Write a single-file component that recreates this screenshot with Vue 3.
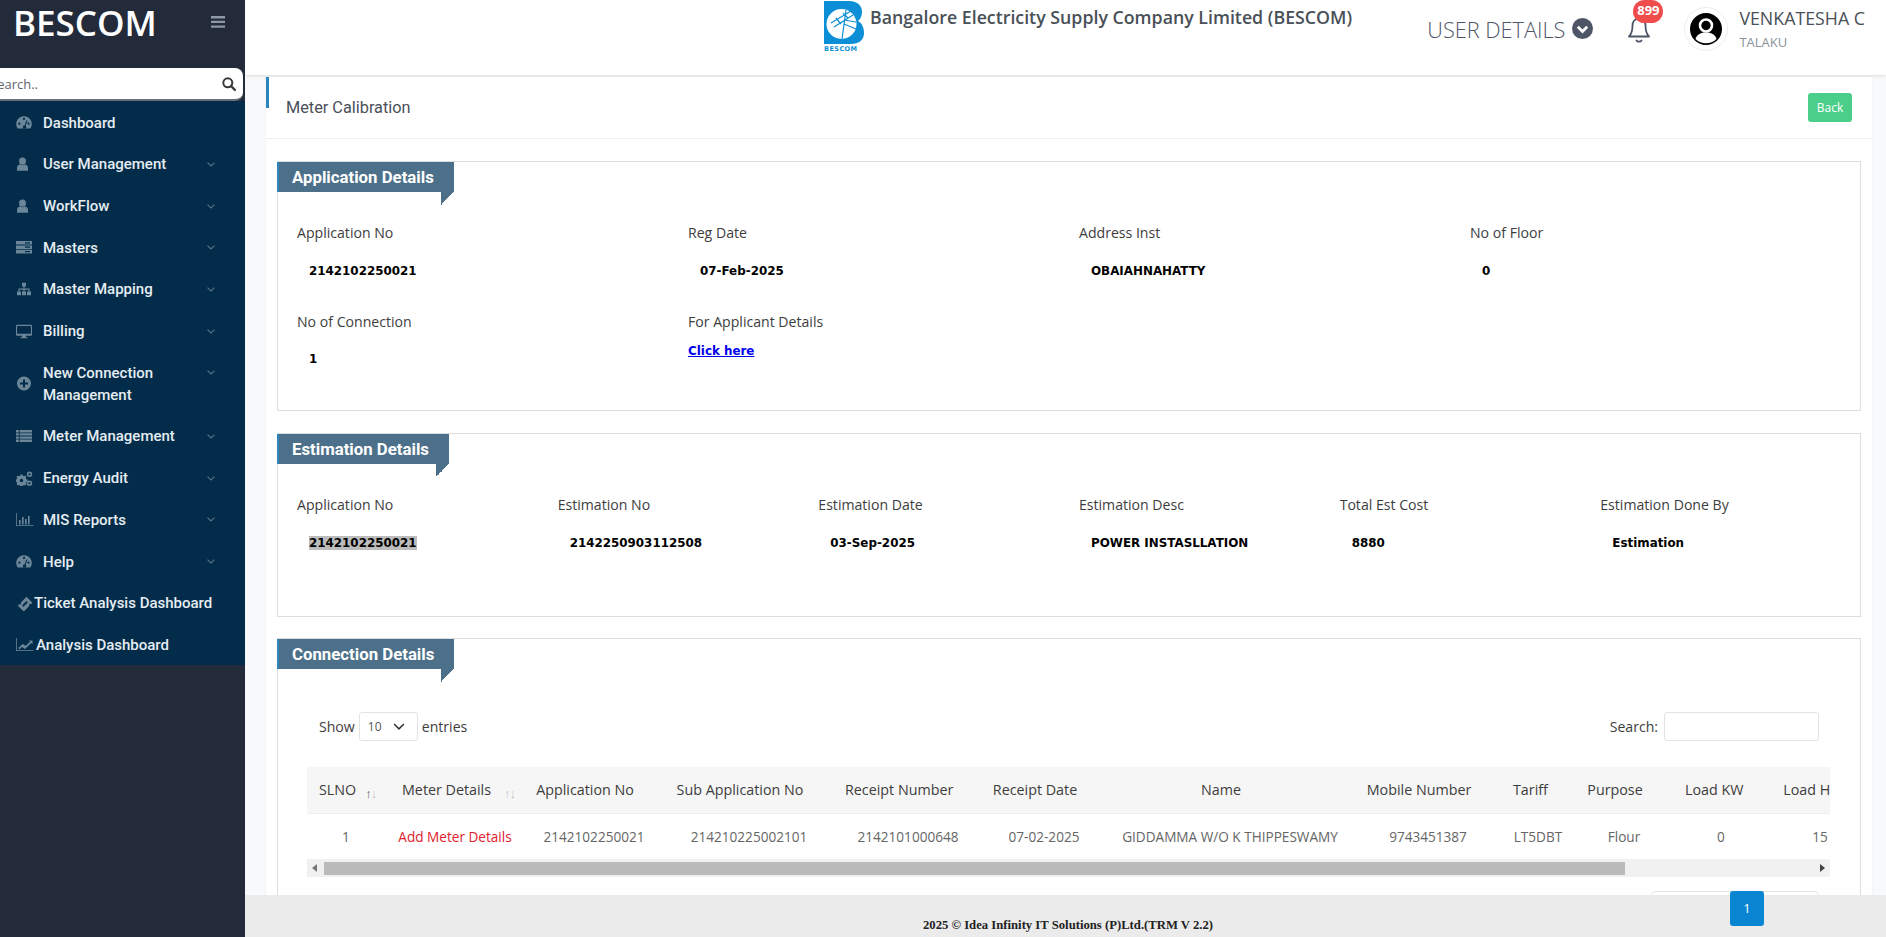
<script setup>
const nav = [
  { t: 'Dashboard', i: 'gauge' },
  { t: 'User Management', i: 'user', c: 1 },
  { t: 'WorkFlow', i: 'user', c: 1 },
  { t: 'Masters', i: 'server', c: 1 },
  { t: 'Master Mapping', i: 'sitemap', c: 1 },
  { t: 'Billing', i: 'desktop', c: 1 },
  { t: 'New Connection Management', i: 'plus', c: 1, wrap: 1 },
  { t: 'Meter Management', i: 'list', c: 1 },
  { t: 'Energy Audit', i: 'cogs', c: 1 },
  { t: 'MIS Reports', i: 'bars', c: 1 },
  { t: 'Help', i: 'gauge', c: 1 },
  { t: 'Ticket Analysis Dashboard', i: 'ticket', tight: 18 },
  { t: 'Analysis Dashboard', i: 'line', tight: 20 }
]
const icons = {
  gauge: 'M8 1.2a7.8 7.8 0 0 0-6.8 11.6l.4.7h12.8l.4-.7A7.8 7.8 0 0 0 8 1.2zM8 2.8a1.1 1.1 0 1 1 0 2.2 1.1 1.1 0 0 1 0-2.2zM3.4 7.6a1.1 1.1 0 1 1 0 2.2 1.1 1.1 0 0 1 0-2.2zM12.6 7.6a1.1 1.1 0 1 1 0 2.2 1.1 1.1 0 0 1 0-2.2zM10.6 5.2l.9.5-2 5a1.6 1.6 0 1 1-1-.3z',
  user: 'M6.500.6a3.400 3.400 0 0 1 3.400 3.600 3.400 3.400 0 0 1-3.400 3.600 3.400 3.400 0 0 1-3.400-3.600A3.400 3.400 0 0 1 6.500.6zM1 13.800v-3C1 8.800 2.500 7.800 3.900 7.600c1.500 1 3.700 1 5.200 0 1.400.2 2.900 1.200 2.900 3.200v3z',
  server: 'M0 1h16v3.600H0zM9 2.200v1.200h5V2.200zM0 5.400h16V9H0zM9 6.600v1.200h5V6.600zM0 9.800h16v3.600H0zM9 11v1.200h5V11z',
  sitemap: 'M6 .8h4v3.600H8.600v2.200h5v3H15v3.600h-4V9.600h1.500V7.700H8.600v1.900H10v3.600H6V9.600h1.400V7.700H3.500v1.900H5v3.600H1V9.600h1.400v-3h5V4.400H6z',
  desktop: 'M1 .8h14a1 1 0 0 1 1 1v9a1 1 0 0 1-1 1H9.800l.4 1.400h1.400v1H4.400v-1h1.400l.4-1.400H1a1 1 0 0 1-1-1v-9a1 1 0 0 1 1-1zM1.100 1.900v7.800h13.800V1.900z',
  plus: 'M8 .5a7 7 0 1 1 0 14 7 7 0 0 1 0-14zM7 3.500v3H4v2h3v3h2v-3h3v-2H9v-3z',
  list: 'M0 1h2.800v2.400H0zM3.600 1H16v2.400H3.600zM0 4.200h2.800v2.400H0zM3.600 4.200H16v2.400H3.600zM0 7.400h2.800v2.400H0zM3.600 7.400H16v2.400H3.600zM0 10.600h2.800V13H0zM3.600 10.600H16V13H3.600z',
  cogs: 'M4.500 3.500h2l.3 1.300 1.200.5 1.100-.7 1.400 1.400-.7 1.100.5 1.200 1.300.3v2l-1.300.3-.5 1.200.7 1.100-1.400 1.400-1.100-.7-1.200.5-.3 1.300h-2l-.3-1.300-1.200-.5-1.100.7-1.400-1.400.7-1.100-.5-1.200-1.300-.3v-2l1.300-.3.5-1.200-.7-1.100 1.400-1.400 1.100.7 1.200-.5zM5.500 7.800a1.700 1.700 0 1 0 0 3.400 1.700 1.700 0 0 0 0-3.400zM13.500.6a2.700 2.700 0 1 1 0 5.400 2.700 2.700 0 0 1 0-5.400zM13.500 2.200a1.100 1.100 0 1 0 0 2.200 1.100 1.100 0 0 0 0-2.200zM13.500 9.600a2.700 2.700 0 1 1 0 5.400 2.700 2.700 0 0 1 0-5.400zM13.500 11.200a1.100 1.100 0 1 0 0 2.200 1.100 1.100 0 0 0 0-2.200z',
  bars: 'M0 1h.8v12.200H17.500v.8H0zM3 8h1.600v4.400H3zM6 5h1.600v7.400H6zM9 7h1.600v5.400H9zM12 4h1.600v8.400H12z',
  ticket: 'M10.500.8l6 6-1.400 1.400a1.300 1.300 0 0 0-1.800 1.800l-5.600 5.600-6-6 1.400-1.400a1.300 1.300 0 0 0 1.800-1.800zM10.400 5L6 9.400l1.400 1.400 4.400-4.400z',
  line: 'M0 1h.8v12.200H17.500v.8H0zM2.500 10.800l4.200-3.800 3 1.800 4.300-4-1.200-1.200h3.700v3.700l-1.200-1.200-6.300 5.800-3-1.800-3 2.600z'
}
const app = [
  { l: 'Application No', v: '2142102250021' },
  { l: 'Reg Date', v: '07-Feb-2025' },
  { l: 'Address Inst', v: 'OBAIAHNAHATTY' },
  { l: 'No of Floor', v: '0' },
  { l: 'No of Connection', v: '1' },
  { l: 'For Applicant Details', link: 'Click here' }
]
const est = [
  { l: 'Application No', v: '2142102250021', sel: 1 },
  { l: 'Estimation No', v: '2142250903112508' },
  { l: 'Estimation Date', v: '03-Sep-2025' },
  { l: 'Estimation Desc', v: 'POWER INSTASLLATION' },
  { l: 'Total Est Cost', v: '8880' },
  { l: 'Estimation Done By', v: 'Estimation' }
]
const cols = [78, 140, 138, 172, 146, 126, 246, 150, 70, 102, 92, 106]
const heads = ['Application No', 'Sub Application No', 'Receipt Number', 'Receipt Date', 'Name', 'Mobile Number', 'Tariff', 'Purpose', 'Load KW', 'Load HP']
const cells = ['2142102250021', '214210225002101', '2142101000648', '07-02-2025', 'GIDDAMMA W/O K THIPPESWAMY', '9743451387', 'LT5DBT', 'Flour', '0', '15']
</script>

<template>
  <div class="page">
    <aside class="side">
      <div class="brand">
        <span class="brand-name">BESCOM</span>
        <svg class="burger" viewBox="0 0 14 12" width="14" height="12"><path d="M0 0h14v2.400H0zM0 4.700h14v2.400H0zM0 9.400h14v2.400H0z" /></svg>
      </div>
      <div class="side-search">
        <span class="side-search-text">Search..</span>
        <svg viewBox="0 0 14 14" width="14" height="14"><circle cx="5.800" cy="5.800" r="4.500" fill="none" stroke="#3a3a3a" stroke-width="2" /><path d="M9 9l4 4" stroke="#3a3a3a" stroke-width="2.400" stroke-linecap="round" /></svg>
      </div>
      <nav class="nav">
        <div v-for="n in nav" :key="n.t" class="nav-item">
          <span class="nav-icon" :class="{ tight: n.tight }" :style="n.tight ? { width: n.tight + 'px' } : null">
            <svg viewBox="0 0 18 15" width="18" height="15"><path :d="icons[n.i]" fill-rule="evenodd" /></svg>
          </span>
          <span class="nav-text" :class="{ wrap: n.wrap }">{{ n.t }}</span>
          <span v-if="n.c" class="nav-chev">
            <svg viewBox="0 0 8 5" width="8" height="5"><path d="M.5.7L4 4l3.500-3.300" fill="none" stroke="#58758b" stroke-width="1.100" /></svg>
          </span>
        </div>
      </nav>
    </aside>

    <div class="main">
      <header class="top">
        <svg class="logo" viewBox="0 0 40 52" width="40" height="52">
          <path d="M0 1H25C34 1 38 6 38 12C38 16 36.500 19 34 21C38 23 40 28 40 33C40 40 35 44 27 44H0Z" fill="#0c8fd6" />
          <circle cx="17.500" cy="24" r="15" fill="#fff" />
          <path d="M22 10L18 39M7 23L27 11M10 27L29 15M12 18l5 6M19 13l5 5M20 24L32 29M20 20L32 22" stroke="#0c8fd6" stroke-width="1.200" fill="none" />
          <text x="0" y="50.500" font-size="6.500" font-weight="700" font-family="DejaVu Sans" fill="#0c8fd6" textLength="33">BESCOM</text>
        </svg>
        <div class="company">Bangalore Electricity Supply Company Limited (BESCOM)</div>
        <div class="top-right">
          <span class="user-details">USER DETAILS</span>
          <svg class="chev-circle" viewBox="0 0 21 21" width="21" height="21">
            <circle cx="10.500" cy="10.500" r="10.500" fill="#4e5566" />
            <path d="M5.800 8.800l4.700 4.700 4.700-4.700" fill="none" stroke="#fff" stroke-width="2.800" />
          </svg>
          <div class="bell">
            <svg viewBox="0 0 24 26" width="24" height="26">
              <path d="M12 1.500c-4 0-6.500 3-6.500 7 0 6-1.500 9-3.500 11h20c-2-2-3.500-5-3.500-11 0-4-2.500-7-6.500-7z" fill="none" stroke="#4e5566" stroke-width="1.800" stroke-linejoin="round" />
              <path d="M9.500 23.500c1 1.600 4 1.600 5 0" fill="none" stroke="#4e5566" stroke-width="1.800" stroke-linecap="round" />
            </svg>
            <span class="badge">899</span>
          </div>
          <div class="avatar">
            <svg viewBox="0 0 32 32" width="32" height="32">
              <circle cx="16" cy="16" r="16" fill="#000" />
              <circle cx="16" cy="12.500" r="6" fill="none" stroke="#fff" stroke-width="2.600" />
              <path d="M5.500 26c1.500-5 5.500-6.500 10.500-6.500S25 21 26.500 26c-3 3-6.500 4.300-10.500 4.300S8.500 29 5.500 26z" fill="#fff" />
            </svg>
          </div>
          <div class="who">
            <div class="who-name">VENKATESHA C</div>
            <div class="who-place">TALAKU</div>
          </div>
        </div>
      </header>

      <div class="content">
        <div class="card">
          <div class="card-head">
            <span class="card-title">Meter Calibration</span>
            <button class="back">Back</button>
          </div>

          <section class="box box-app">
            <div class="ribbon">Application Details</div>
            <div class="fields four">
              <div v-for="f in app" :key="f.l" class="field">
                <div class="label">{{ f.l }}</div>
                <a v-if="f.link" class="link" href="#">{{ f.link }}</a>
                <div v-else class="value">{{ f.v }}</div>
              </div>
            </div>
          </section>

          <section class="box box-est">
            <div class="ribbon">Estimation Details</div>
            <div class="fields six">
              <div v-for="f in est" :key="f.l" class="field">
                <div class="label">{{ f.l }}</div>
                <div class="value"><span :class="{ sel: f.sel }">{{ f.v }}</span></div>
              </div>
            </div>
          </section>

          <section class="box box-conn">
            <div class="ribbon">Connection Details</div>
            <div class="controls">
              <div class="ctl">
                <span>Show</span>
                <div class="select">
                  <span>10</span>
                  <svg viewBox="0 0 10 6" width="12" height="7"><path d="M.8.8L5 5 9.200.8" fill="none" stroke="#333" stroke-width="1.300" /></svg>
                </div>
                <span>entries</span>
              </div>
              <div class="ctl">
                <span>Search:</span>
                <div class="search-input"></div>
              </div>
            </div>
            <div class="table-wrap">
              <table class="grid">
                <colgroup><col v-for="(w, i) in cols" :key="i" :style="{ width: w + 'px' }" /></colgroup>
                <thead>
                  <tr>
                    <th class="th-sl">SLNO<span class="sort"><b>↑</b>↓</span></th>
                    <th class="th-md">Meter Details<span class="sort sort-far">↑↓</span></th>
                    <th v-for="h in heads" :key="h">{{ h }}</th>
                  </tr>
                </thead>
                <tbody>
                  <tr>
                    <td>1</td>
                    <td class="red">Add Meter Details</td>
                    <td v-for="c in cells" :key="c">{{ c }}</td>
                  </tr>
                </tbody>
              </table>
              <div class="hbar">
                <i class="arrow-l"></i>
                <div class="thumb"></div>
                <i class="arrow-r"></i>
              </div>
            </div>
            <div class="pager-row">
              <div class="pager"><span class="page-btn">1</span></div>
            </div>
          </section>
        </div>
      </div>

      <footer class="foot">2025 © Idea Infinity IT Solutions (P)Ltd.(TRM V 2.2)</footer>
    </div>
  </div>
</template>

<style>
html, body { margin: 0; overflow: hidden; }
</style>

<style scoped>
.page { display: flex; width: 1886px; height: 937px; overflow: hidden; background: #f8f9fb; font-family: "Open Sans", sans-serif; }

.side { width: 245px; flex: none; background: #232a3a; display: flex; flex-direction: column; }
.brand { height: 68px; display: flex; align-items: flex-start; justify-content: space-between; padding: 0 20px 0 13px; box-sizing: border-box; }
.brand-name { font-size: 35px; font-weight: 600; line-height: 45px; color: #fff; }
.burger { margin-top: 16px; fill: #8b98a6; }
.side-search { height: 33px; width: 253px; margin-left: -10px; box-sizing: border-box; background: #fff; border-radius: 0 8px 8px 0; border-bottom: 2px solid #6b6f7a; display: flex; align-items: center; justify-content: space-between; padding: 1px 7px 0 0; font-size: 13px; color: #5f6670; }
.nav { background: #022c4a; padding-top: .8px; height: 564px; box-sizing: border-box; }
.nav-item { display: flex; align-items: flex-start; padding: 9.850px 30px 9.850px 16px; }
.nav-icon { width: 27px; flex: none; height: 22px; display: flex; align-items: center; fill: #6b8599; align-self: center; }
.nav-icon.tight svg { flex: none; }
.nav-text { flex: 1; font: 500 15px/22px Roboto, sans-serif; color: #e6edf2; white-space: nowrap; }
.nav-text.wrap { white-space: normal; padding-right: 20px; }
.nav-chev { height: 22px; display: flex; align-items: center; }

.main { flex: 1; min-width: 0; display: flex; flex-direction: column; position: relative; overflow: hidden; }
.top { height: 75px; flex: none; background: #fff; box-shadow: 0 1px 3px rgba(0, 0, 0, .12); display: flex; align-items: flex-start; padding-left: 579px; padding-right: 21px; box-sizing: border-box; position: relative; }
.logo { flex: none; }
.company { margin-left: 6px; font-size: 17.780px; font-weight: 600; line-height: 34px; color: #495057; white-space: nowrap; }
.top-right { margin-left: auto; display: flex; align-items: flex-start; }
.user-details { font-size: 21.700px; line-height: 60px; color: #4e5566; white-space: nowrap; font-weight: 300; }
.chev-circle { margin: 18px 0 0 7px; }
.bell { position: relative; margin: 17px 0 0 34px; width: 24px; height: 26px; }
.badge { position: absolute; left: 6px; top: -17px; width: 30px; height: 23px; border-radius: 12px; background: #ef4c4c; color: #fff; font: 700 13px/21px "Open Sans", sans-serif; text-align: center; }
.avatar { margin: 7px 0 0 33px; width: 44px; height: 44px; border: 1px solid #eee; border-radius: 50%; box-sizing: border-box; display: flex; align-items: center; justify-content: center; }
.who { margin-left: 11px; padding-top: 6px; }
.who-name { font-size: 17.800px; line-height: 24px; color: #495057; white-space: nowrap; }
.who-place { font-size: 13px; line-height: 24px; color: #8b929a; }

.content { flex: 1; padding: 2px 14px 0 21px; min-height: 0; }
.card { background: #fff; box-shadow: 0 0 1px rgba(0, 0, 0, .1); position: relative; height: 900px; }
.card::before { content: ""; position: absolute; left: 0; top: 0; width: 3px; height: 31px; background: #2a86bd; }
.card-head { height: 61px; border-bottom: 1px solid #eee; display: flex; align-items: center; justify-content: space-between; padding: 0 20px; }
.card-title { font: 400 16.300px Roboto, sans-serif; color: #4a5058; }
.back { width: 44px; height: 29px; border: 0; border-radius: 3px; padding: 0; background: #4bce8a; color: #fff; font: 12px "Open Sans", sans-serif; margin-right: 0; }

.box { margin: 22px 11px 0; border: 1px solid #ddd; box-sizing: border-box; }
.box-app { height: 250px; }
.box-est { height: 184px; }
.box-conn { margin-top: 21px; height: 400px; }
.ribbon { position: relative; width: fit-content; height: 30px; padding: 0 20px 0 13px; background: #4d708a; border-left: 2px solid #2a86bd; margin-left: -1px; color: #fff; font: 700 16.800px/31px Roboto, sans-serif; }
.ribbon::after { content: ""; position: absolute; right: 0; top: 30px; width: 13px; height: 13px; background: linear-gradient(to bottom right, #4d708a 50%, transparent 50%); }

.fields { display: grid; padding: 31px 0 0 19px; row-gap: 30px; }
.four { grid-template-columns: repeat(4, 391px); }
.six { grid-template-columns: repeat(6, 260.670px); }
.label { font-size: 14.100px; line-height: 20px; color: #3d3d3d; white-space: nowrap; }
.value { margin-top: 17.500px; padding-left: 12px; font: 700 11.900px/21px "DejaVu Sans", sans-serif; color: #000; white-space: nowrap; }
.sel { background: #bcbcbc; }
.link { display: block; margin-top: 9px; font: 700 11.900px/20px "DejaVu Sans", sans-serif; color: #0000ee; }

.controls { display: flex; justify-content: space-between; margin: 43px 41px 0; height: 29px; font-size: 14.100px; color: #3d3d3d; }
.ctl { display: flex; align-items: center; gap: 4px; }
.select { width: 59px; height: 29px; box-sizing: border-box; border: 1px solid #e3e3e3; border-radius: 3px; display: flex; align-items: center; justify-content: space-between; padding: 0 12px 0 8px; font-size: 12px; color: #555; }
.search-input { width: 155px; height: 29px; margin-left: 2px; box-sizing: border-box; border: 1px solid #e3e3e3; border-radius: 3px; }

.table-wrap { margin: 26px 30px 0 29px; overflow: hidden; }
.grid { border-collapse: collapse; table-layout: fixed; width: 1566px; font-size: 13.600px; }
.grid th { height: 46px; padding: 0 28px 0 10px; background: #f6f6f6; border-bottom: 1px solid #eee; font-size: 14.300px; font-weight: 400; color: #3d3d3d; text-align: center; white-space: nowrap; box-sizing: border-box; }
.grid th.th-sl { padding: 0 0 0 12px; text-align: left; }
.grid th.th-md { padding: 0 0 0 17px; text-align: left; }
.sort { font-size: 13px; color: #c4c4c4; margin-left: 9px; position: relative; top: 3px; letter-spacing: -1px; }
.sort b { font-weight: 400; color: #666; }
.sort-far { margin-left: 13px; }
.grid td { height: 46px; padding: 0 10px; color: #666; text-align: center; white-space: nowrap; box-sizing: border-box; }
.grid td.red { color: #e0202c; }
.hbar { position: relative; height: 18px; background: #f1f1f1; display: flex; align-items: center; padding-left: 17px; }
.thumb { width: 1301px; height: 13px; background: #bababa; }
.arrow-l { position: absolute; left: 5px; top: 5px; border: 4px solid transparent; border-left: 0; border-right: 5px solid #777; }
.arrow-r { position: absolute; right: 5px; top: 5px; border: 4px solid transparent; border-right: 0; border-left: 5px solid #444; }

.pager-row { display: flex; justify-content: flex-end; margin: 14px 41px 0 0; }
.pager { position: relative; width: 168px; height: 35px; box-sizing: border-box; border: 1px solid #e3e3e3; border-radius: 4px; }
.page-btn { position: absolute; left: 78px; top: -1px; z-index: 3; width: 34px; height: 35px; border-radius: 3px; background: #0a85d1; color: #fff; font-size: 13px; line-height: 35px; text-align: center; }

.foot { position: absolute; left: 0; right: 0; bottom: 0; height: 42px; z-index: 2; background: #ebebeb; padding: 20px 0 0 5px; box-sizing: border-box; text-align: center; font: 700 12.700px/20px "Liberation Serif", serif; color: #222; }
</style>
